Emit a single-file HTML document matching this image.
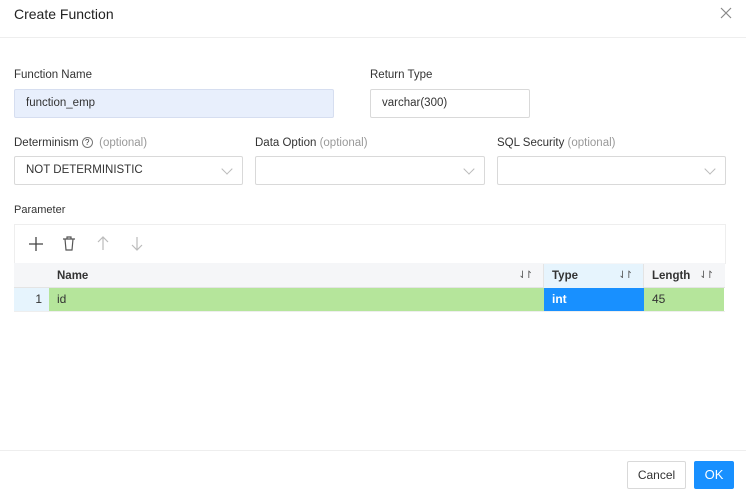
<!DOCTYPE html><html><head><style>
body{margin:0;width:746px;height:493px;background:#fff;font-family:"Liberation Sans",sans-serif;font-size:12px;color:#333;position:relative;overflow:hidden}
.a{position:absolute;box-sizing:border-box}
.lbl{font-size:11.5px;color:#333}
.opt{color:#999}
.in{border:1px solid #d9d9d9;border-radius:2px;padding:0 11px;line-height:27px;font-size:11.5px}
.chev{position:absolute;right:11px;top:8px;width:7px;height:7px;border-right:1px solid #bbb;border-bottom:1px solid #bbb;transform:rotate(45deg)}
.th{font-weight:bold;line-height:24px;padding-left:8px;border-right:1px solid #e4e4e4;font-size:11.5px}
.srt{position:absolute;right:12px;top:0;font-weight:normal;color:#555;font-size:10px;letter-spacing:-2px}
</style></head><body>
<div class="a" style="left:14px;top:6px;font-size:14px;color:#222">Create Function</div>
<svg class="a" style="left:720px;top:7px" width="12" height="12" viewBox="0 0 12 12" stroke="#888" stroke-width="1.2"><path d="M1 1l10 10M11 1L1 11"/></svg>
<div class="a" style="left:0;top:37px;width:746px;height:1px;background:#eee"></div>

<div class="a lbl" style="left:14px;top:69px">Function Name</div>
<div class="a in" style="left:14px;top:89px;width:320px;height:29px;background:#e8effc;border-color:#d6def0">function_emp</div>
<div class="a lbl" style="left:370px;top:69px">Return Type</div>
<div class="a in" style="left:370px;top:89px;width:160px;height:29px">varchar(300)</div>

<div class="a lbl" style="left:14px;top:137px">Determinism <span style="display:inline-block;width:9px;height:9px;border:1px solid #777;border-radius:50%;font-size:8px;line-height:9px;text-align:center;vertical-align:1px">?</span> &nbsp;<span class="opt">(optional)</span></div>
<div class="a in" style="left:14px;top:156px;width:229px;height:29px">NOT DETERMINISTIC<div class="chev"></div></div>
<div class="a lbl" style="left:255px;top:137px">Data Option <span class="opt">(optional)</span></div>
<div class="a in" style="left:255px;top:156px;width:230px;height:29px"><div class="chev"></div></div>
<div class="a lbl" style="left:497px;top:137px">SQL Security <span class="opt">(optional)</span></div>
<div class="a in" style="left:497px;top:156px;width:229px;height:29px"><div class="chev"></div></div>

<div class="a lbl" style="left:14px;top:204px;font-size:11px">Parameter</div>
<div class="a" style="left:14px;top:224px;width:712px;height:40px;border:1px solid #eee"></div>
<svg class="a" style="left:29px;top:237px" width="14" height="14" viewBox="0 0 14 14" stroke="#444" stroke-width="1.3"><path d="M7 0v14M0 7h14"/></svg>
<svg class="a" style="left:62px;top:236px" width="14" height="15" viewBox="0 0 14 15" fill="none" stroke="#555" stroke-width="1.2"><path d="M1 3h12M5 3V1h4v2M3 3l1 11h6l1-11"/></svg>
<svg class="a" style="left:97px;top:236px" width="12" height="15" viewBox="0 0 12 15" fill="none" stroke="#bbb" stroke-width="1.2"><path d="M6 14V1M1 6l5-5 5 5"/></svg>
<svg class="a" style="left:131px;top:236px" width="12" height="15" viewBox="0 0 12 15" fill="none" stroke="#bbb" stroke-width="1.2"><path d="M6 1v13M1 9l5 5 5-5"/></svg>

<div class="a" style="left:14px;top:263px;width:711px;height:25px;background:#f5f6f8;border-bottom:1px solid #e4e4e4"></div>
<div class="a th" style="left:49px;top:264px;width:495px;height:24px">Name<span class="srt">⇃↾</span></div>
<div class="a th" style="left:544px;top:264px;width:100px;height:24px;background:#e6f4fd">Type<span class="srt">⇃↾</span></div>
<div class="a th" style="left:644px;top:264px;width:80px;height:24px;border:none">Length<span class="srt" style="right:12px">⇃↾</span></div>
<div class="a" style="left:14px;top:288px;width:35px;height:23px;background:#e6f4fd;text-align:right;padding-right:7px;line-height:23px">1</div>
<div class="a" style="left:49px;top:288px;width:495px;height:23px;background:#b5e59b;padding-left:8px;line-height:23px">id</div>
<div class="a" style="left:544px;top:288px;width:100px;height:23px;background:#1890ff;color:#fff;font-weight:bold;padding-left:8px;line-height:23px">int</div>
<div class="a" style="left:644px;top:288px;width:80px;height:23px;background:#b5e59b;padding-left:8px;line-height:23px">45</div>
<div class="a" style="left:14px;top:311px;width:711px;height:1px;background:#eee"></div>

<div class="a" style="left:0;top:450px;width:746px;height:1px;background:#eee"></div>
<div class="a" style="left:627px;top:461px;width:59px;height:28px;border:1px solid #d9d9d9;border-radius:2px;text-align:center;line-height:26px">Cancel</div>
<div class="a" style="left:694px;top:461px;width:40px;height:28px;background:#1890ff;color:#fff;border-radius:2px;text-align:center;line-height:28px;font-size:13px">OK</div>
</body></html>
